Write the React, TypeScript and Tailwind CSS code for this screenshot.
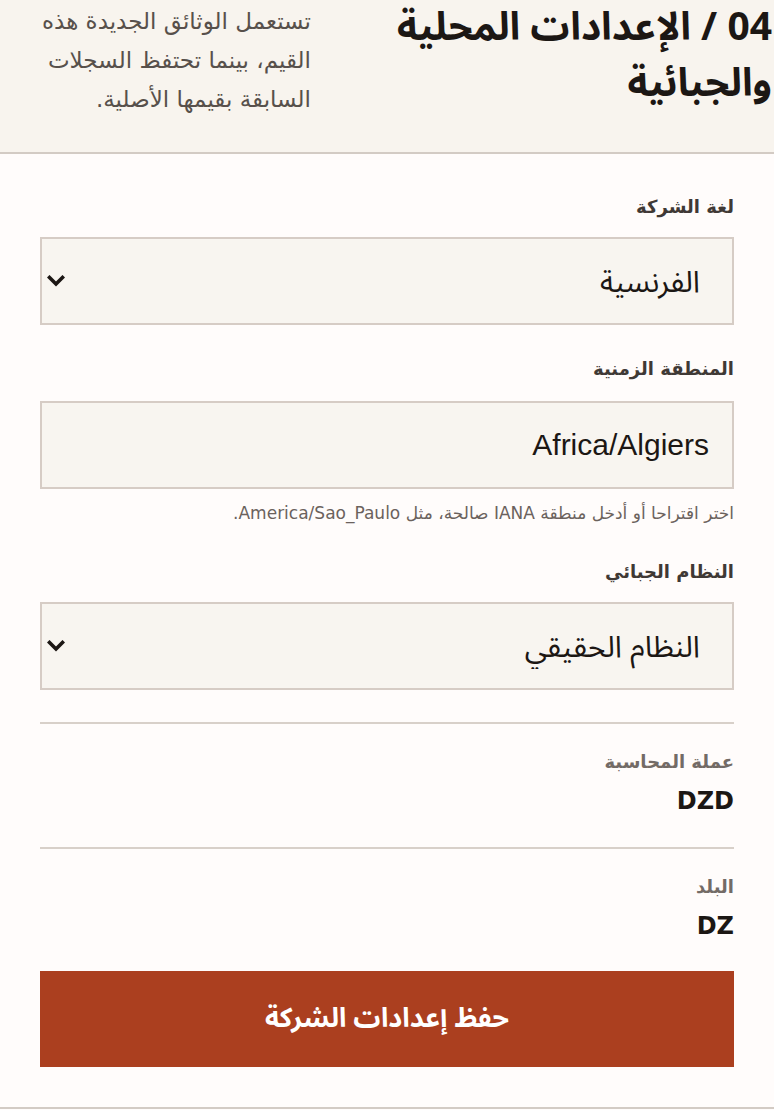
const arabicSans = { fontFamily: '"Noto Sans Arabic", "Noto Sans", sans-serif' };
const dejavu = { fontFamily: '"DejaVu Sans", sans-serif' };
const fieldFont = { fontFamily: '"Liberation Sans", "Noto Sans Arabic", sans-serif' };

type Option = { value: string; label: string };

const LANGUAGES: Option[] = [
  { value: "fr", label: "الفرنسية" },
  { value: "ar", label: "العربية" },
  { value: "en", label: "الإنجليزية" },
];

const TAX_REGIMES: Option[] = [
  { value: "real", label: "النظام الحقيقي" },
  { value: "flat", label: "النظام الجزافي" },
];

function FieldLabel({ children, muted }: { children: React.ReactNode; muted?: boolean }) {
  return (
    <p
      className={`text-[18px] font-bold leading-6 ${muted ? "text-[#736b66]" : "text-[#3f3935]"}`}
      style={dejavu}
    >
      {children}
    </p>
  );
}

function SelectField({ options, value }: { options: Option[]; value: string }) {
  return (
    <div className="relative">
      <select
        defaultValue={value}
        className="h-[88px] w-full appearance-none border-2 border-[#d6ccc5] bg-[#f8f5f0] pr-[32px] pl-10 text-[30px] text-[#1c1714] outline-none"
        style={fieldFont}
      >
        {options.map((o) => (
          <option key={o.value} value={o.value}>
            {o.label}
          </option>
        ))}
      </select>
      <svg
        viewBox="0 0 18 12"
        width="18"
        height="12"
        className="pointer-events-none absolute top-1/2 left-[7px] -translate-y-1/2"
      >
        <polyline
          points="2.5,2.5 9,9 15.5,2.5"
          fill="none"
          stroke="#1c1714"
          strokeWidth="3.6"
          strokeLinecap="square"
        />
      </svg>
    </div>
  );
}

function InfoRow({ label, value }: { label: string; value: string }) {
  return (
    <div className="border-t-2 border-[#d8d0c9] pt-[26px]">
      <FieldLabel muted>{label}</FieldLabel>
      <p className="mt-3 text-[24px] font-bold leading-[30px] text-[#1c1714]" style={dejavu}>
        {value}
      </p>
    </div>
  );
}

export default function App() {
  return (
    <div dir="rtl" className="min-h-[1110px] w-[774px] overflow-hidden bg-[#fffcfb]">
      <div className="h-[154px] overflow-hidden border-b-2 border-[#d3cbc4] bg-[#f8f4ee]">
        <div className="flex items-start justify-between pr-[2px] pl-9">
          <h2
            className="w-[384px] text-[39px] font-bold leading-[56px] text-[#1c1714]"
            style={arabicSans}
          >
            04 / الإعدادات المحلية والجبائية
          </h2>
          <p className="mt-[2px] w-[275px] text-[23px] leading-[39px] text-[#57504b]" style={dejavu}>
            تستعمل الوثائق الجديدة هذه القيم، بينما تحتفظ السجلات السابقة بقيمها الأصلية.
          </p>
        </div>
      </div>

      <form
        className="border-b-2 border-[#d3cbc4] px-10 pt-[41px] pb-10"
        onSubmit={(e) => e.preventDefault()}
      >
        <div>
          <div className="mb-[18px]">
            <FieldLabel>لغة الشركة</FieldLabel>
          </div>
          <SelectField options={LANGUAGES} value="fr" />
        </div>

        <div className="mt-8">
          <div className="mb-5">
            <FieldLabel>المنطقة الزمنية</FieldLabel>
          </div>
          <input
            defaultValue="Africa/Algiers"
            className="h-[88px] w-full border-2 border-[#d6ccc5] bg-[#f8f5f0] pr-[23px] pl-[25px] text-[30px] text-[#1c1714] outline-none"
            style={fieldFont}
          />
          <p className="mt-[14px] text-[17px] leading-5 text-[#6b625d]" style={dejavu}>
            اختر اقتراحا أو أدخل منطقة IANA صالحة، مثل America/Sao_Paulo.
          </p>
        </div>

        <div className="mt-[37px]">
          <div className="mb-[18px]">
            <FieldLabel>النظام الجبائي</FieldLabel>
          </div>
          <SelectField options={TAX_REGIMES} value="real" />
        </div>

        <div className="mt-8">
          <InfoRow label="عملة المحاسبة" value="DZD" />
        </div>
        <div className="mt-[31px]">
          <InfoRow label="البلد" value="DZ" />
        </div>

        <button
          type="submit"
          className="mt-[30px] h-[96px] w-full bg-[#ab3f1f] text-[27px] font-bold text-white"
          style={arabicSans}
        >
          حفظ إعدادات الشركة
        </button>
      </form>
    </div>
  );
}
